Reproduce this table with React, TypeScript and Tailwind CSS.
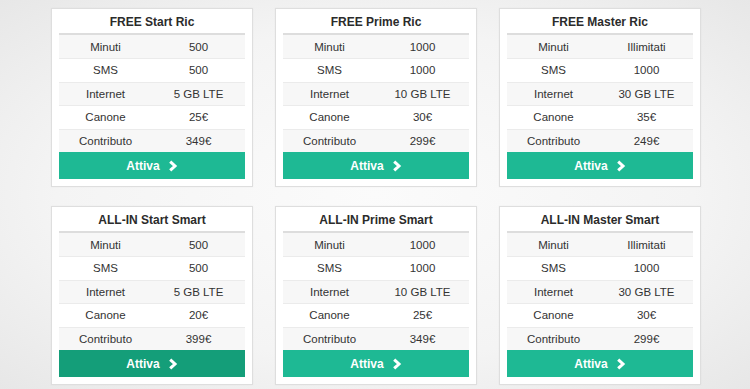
const plans = [
  {
    title: "FREE Start Ric",
    rows: [["Minuti", "500"], ["SMS", "500"], ["Internet", "5 GB LTE"], ["Canone", "25€"], ["Contributo", "349€"]],
  },
  {
    title: "FREE Prime Ric",
    rows: [["Minuti", "1000"], ["SMS", "1000"], ["Internet", "10 GB LTE"], ["Canone", "30€"], ["Contributo", "299€"]],
  },
  {
    title: "FREE Master Ric",
    rows: [["Minuti", "Illimitati"], ["SMS", "1000"], ["Internet", "30 GB LTE"], ["Canone", "35€"], ["Contributo", "249€"]],
  },
  {
    title: "ALL-IN Start Smart",
    rows: [["Minuti", "500"], ["SMS", "500"], ["Internet", "5 GB LTE"], ["Canone", "20€"], ["Contributo", "399€"]],
    active: true,
  },
  {
    title: "ALL-IN Prime Smart",
    rows: [["Minuti", "1000"], ["SMS", "1000"], ["Internet", "10 GB LTE"], ["Canone", "25€"], ["Contributo", "349€"]],
  },
  {
    title: "ALL-IN Master Smart",
    rows: [["Minuti", "Illimitati"], ["SMS", "1000"], ["Internet", "30 GB LTE"], ["Canone", "30€"], ["Contributo", "299€"]],
  },
];

function Chevron() {
  return (
    <svg width="10" height="12" viewBox="0 0 10 12" className="ml-[8px]">
      <path d="M2.2 1.6 L7 6 L2.2 10.4" fill="none" stroke="white" strokeWidth="3" strokeLinejoin="miter" />
    </svg>
  );
}

function PlanCard({ title, rows, active }: { title: string; rows: string[][]; active?: boolean }) {
  return (
    <div className="w-[202px] bg-white border border-[#dedede] px-[7px] pb-[7px] shadow-[0_0_2px_rgba(0,0,0,0.04)]">
      <div className="h-[24px] pt-[2px] flex items-center justify-center text-[12px] font-bold text-[#2b2b2b]">
        {title}
      </div>
      <div className="border-t-2 border-[#dddddd]">
        {rows.map(([label, value], i) => (
          <div
            key={label}
            className={`grid grid-cols-2 h-[23.4px] pt-[1px] items-center text-center text-[11.5px] text-[#333] ${
              i > 0 ? "border-t border-[#ebebeb]" : ""
            } ${i % 2 === 0 ? "bg-[#f7f7f7]" : "bg-white"}`}
          >
            <span>{label}</span>
            <span>{value}</span>
          </div>
        ))}
      </div>
      <div
        className={`h-[27px] pt-[2px] flex items-center justify-center text-white text-[12px] font-bold ${
          active ? "bg-[#149e79]" : "bg-[#1eb994]"
        }`}
      >
        Attiva
        <Chevron />
      </div>
    </div>
  );
}

export default function App() {
  return (
    <div
      className="w-[750px] h-[389px] overflow-hidden bg-[radial-gradient(ellipse_at_center,#fbfbfb_0%,#f4f4f4_60%,#e7e7e7_100%)] pt-[8px] pl-[51px]"
      style={{ fontFamily: '"Liberation Sans", Arial, sans-serif' }}
    >
      <div className="grid grid-cols-[202px_202px_202px] gap-x-[22px] gap-y-[19px]">
        {plans.map((p) => (
          <PlanCard key={p.title} {...p} />
        ))}
      </div>
    </div>
  );
}
